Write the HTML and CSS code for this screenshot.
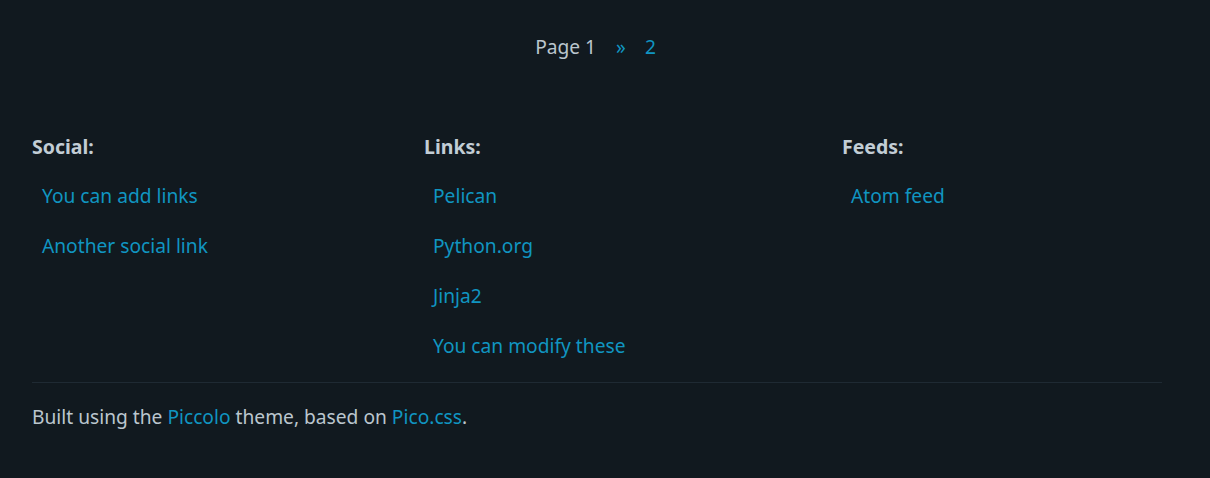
FILE: index.html
```html
<!DOCTYPE html>
<html lang="en">
<head>
<meta charset="utf-8">
<title>Piccolo</title>
<link rel="stylesheet" href="styles.css">
</head>
<body>
<nav class="pager">
  <span class="pager-current">Page 1</span>
  <a class="pager-link pager-next" href="#">»</a>
  <a class="pager-link" href="#">2</a>
</nav>
<footer class="site-footer">
  <div class="footer-cols">
    <section class="footer-col">
      <h4 class="footer-title">Social:</h4>
      <ul class="footer-list">
        <li><a href="#">You can add links</a></li>
        <li><a href="#">Another social link</a></li>
      </ul>
    </section>
    <section class="footer-col">
      <h4 class="footer-title">Links:</h4>
      <ul class="footer-list">
        <li><a href="#">Pelican</a></li>
        <li><a href="#">Python.org</a></li>
        <li><a href="#">Jinja2</a></li>
        <li><a href="#">You can modify these</a></li>
      </ul>
    </section>
    <section class="footer-col">
      <h4 class="footer-title">Feeds:</h4>
      <ul class="footer-list">
        <li><a href="#">Atom feed</a></li>
      </ul>
    </section>
  </div>
  <hr class="footer-rule">
  <p class="credits">Built using the <a href="#">Piccolo</a> theme, based on <a href="#">Pico.css</a>.</p>
</footer>
</body>
</html>
```
FILE: styles.css
```css
html, body {
  margin: 0;
  padding: 0;
}
body {
  background: #11191f;
  color: #bbc6ce;
  font-family: "Noto Sans", "Open Sans", sans-serif;
  font-size: 19.2px;
  height: 478px;
  overflow: hidden;
}
a {
  color: #1095c1;
  text-decoration: none;
}
.pager {
  margin-top: 32px;
  height: 30px;
  line-height: 30px;
  display: flex;
  justify-content: center;
  padding-right: 19px;
}
.pager-current {
  margin-right: 20px;
}
.pager-next {
  margin-right: 19px;
}
.site-footer {
  margin: 70px 48px 0 32px;
}
.footer-cols {
  display: grid;
  grid-template-columns: 392px 418px 1fr;
}
.footer-title {
  margin: 0;
  font-size: 19.5px;
  font-weight: 700;
  line-height: 30px;
  color: #c2cdd5;
}
.footer-list {
  list-style: none;
  margin: 9px 0 0;
  padding: 0 0 0 10px;
}
.footer-list li {
  line-height: 50px;
}
.footer-col:nth-child(2) .footer-list,
.footer-col:nth-child(3) .footer-list {
  padding-left: 9px;
}
.footer-rule {
  border: 0;
  border-top: 1px solid #1f2a33;
  margin: 11px 0 0;
  height: 0;
}
.credits {
  margin: 19px 0 0;
  line-height: 30px;
}
```
